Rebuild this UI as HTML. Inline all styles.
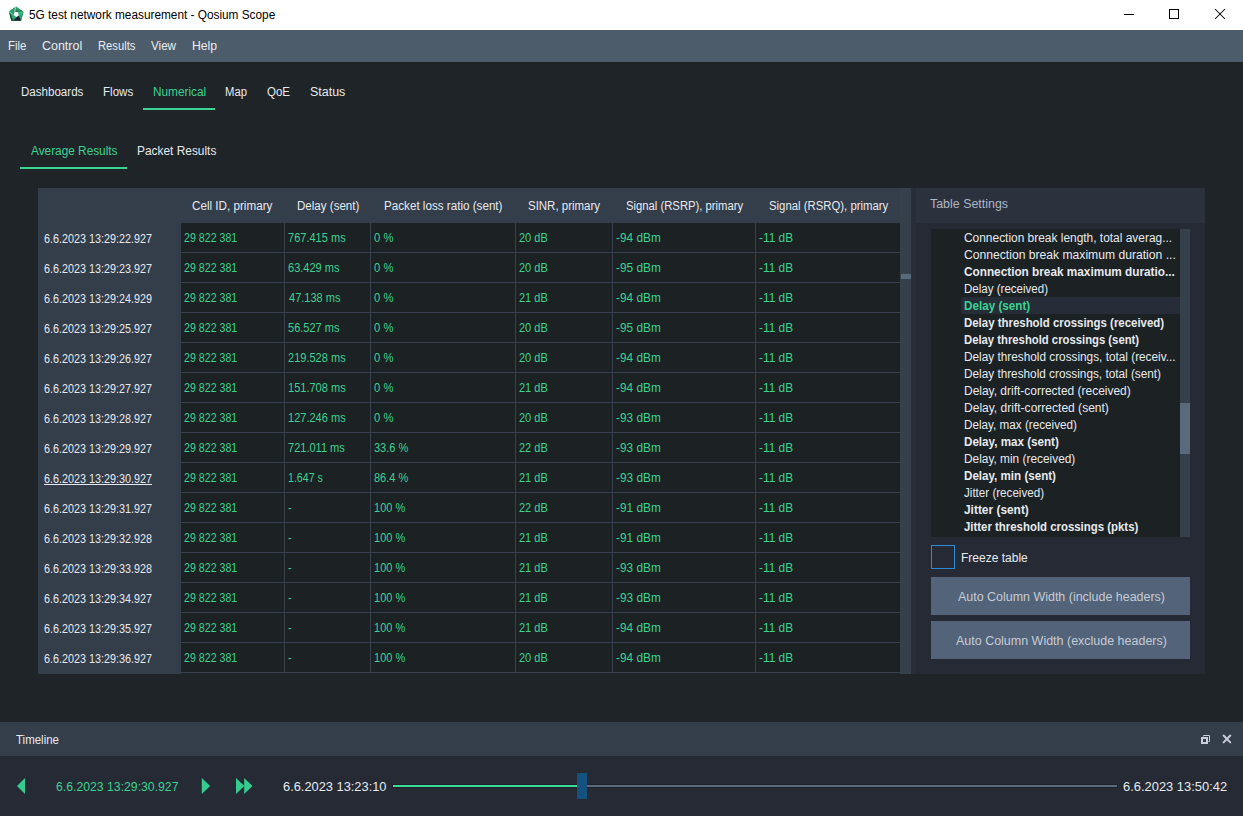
<!DOCTYPE html>
<html lang="en"><head><meta charset="utf-8"><title>5G test network measurement - Qosium Scope</title>
<style>
html,body{margin:0;padding:0;}
body{width:1243px;height:816px;overflow:hidden;background:#1f2428;position:relative;font-family:"Liberation Sans", sans-serif;}
.r{position:absolute;}
.t{position:absolute;white-space:pre;transform-origin:0 50%;line-height:20px;height:20px;}
</style></head><body>
<div class="r" style="left:0px;top:0px;width:1243px;height:30px;background:#ffffff;"></div>
<div class="r" style="left:0px;top:30px;width:1243px;height:32px;background:#4c5c6a;"></div>
<div class="r" style="left:143px;top:108px;width:72px;height:2px;background:#3bd391;"></div>
<div class="r" style="left:20px;top:167px;width:107px;height:2px;background:#3bd391;"></div>
<div class="r" style="left:38px;top:188px;width:873px;height:486px;background:#343d4a;"></div>
<div class="r" style="left:900px;top:188px;width:11px;height:486px;background:#36404a;"></div>
<div class="r" style="left:901px;top:274px;width:10px;height:5px;background:#596a7d;"></div>
<div class="r" style="left:181px;top:223px;width:719px;height:450px;background:#1c2124;"></div>
<div class="r" style="left:181px;top:673px;width:719px;height:1px;background:#1f2428;"></div>
<div class="r" style="left:181px;top:252px;width:719px;height:1px;background:#394151;"></div>
<div class="r" style="left:181px;top:282px;width:719px;height:1px;background:#394151;"></div>
<div class="r" style="left:181px;top:312px;width:719px;height:1px;background:#394151;"></div>
<div class="r" style="left:181px;top:342px;width:719px;height:1px;background:#394151;"></div>
<div class="r" style="left:181px;top:372px;width:719px;height:1px;background:#394151;"></div>
<div class="r" style="left:181px;top:402px;width:719px;height:1px;background:#394151;"></div>
<div class="r" style="left:181px;top:432px;width:719px;height:1px;background:#394151;"></div>
<div class="r" style="left:181px;top:462px;width:719px;height:1px;background:#394151;"></div>
<div class="r" style="left:181px;top:492px;width:719px;height:1px;background:#394151;"></div>
<div class="r" style="left:181px;top:522px;width:719px;height:1px;background:#394151;"></div>
<div class="r" style="left:181px;top:552px;width:719px;height:1px;background:#394151;"></div>
<div class="r" style="left:181px;top:582px;width:719px;height:1px;background:#394151;"></div>
<div class="r" style="left:181px;top:612px;width:719px;height:1px;background:#394151;"></div>
<div class="r" style="left:181px;top:642px;width:719px;height:1px;background:#394151;"></div>
<div class="r" style="left:181px;top:672px;width:719px;height:1px;background:#394151;"></div>
<div class="r" style="left:284px;top:223px;width:1px;height:450px;background:#394151;"></div>
<div class="r" style="left:370px;top:223px;width:1px;height:450px;background:#394151;"></div>
<div class="r" style="left:515px;top:223px;width:1px;height:450px;background:#394151;"></div>
<div class="r" style="left:612px;top:223px;width:1px;height:450px;background:#394151;"></div>
<div class="r" style="left:755px;top:223px;width:1px;height:450px;background:#394151;"></div>
<div class="r" style="left:911px;top:188px;width:294px;height:486px;background:#282e38;"></div>
<div class="r" style="left:916px;top:188px;width:289px;height:35px;background:#2b313d;"></div>
<div class="r" style="left:916px;top:223px;width:289px;height:451px;background:#262a35;"></div>
<div class="r" style="left:931px;top:229px;width:249px;height:308px;background:#1c2124;"></div>
<div class="r" style="left:1180px;top:229px;width:10px;height:308px;background:#36404a;"></div>
<div class="r" style="left:1180px;top:403px;width:10px;height:51px;background:#596a7d;"></div>
<div class="r" style="left:961px;top:297px;width:219px;height:17px;background:#272d38;"></div>
<div class="r" style="left:931px;top:545px;width:24px;height:24px;background:#252a35;box-sizing:border-box;border:1px solid #2d8ad6;"></div>
<div class="r" style="left:931px;top:577px;width:259px;height:38px;background:#536379;"></div>
<div class="r" style="left:931px;top:621px;width:259px;height:38px;background:#536379;"></div>
<div class="r" style="left:0px;top:722px;width:1243px;height:34px;background:#343d4a;"></div>
<div class="r" style="left:0px;top:756px;width:1243px;height:60px;background:#252a34;"></div>
<div class="r" style="left:392px;top:784px;width:185px;height:4px;background:#221f28;"></div>
<div class="r" style="left:587px;top:784px;width:531px;height:4px;background:#1e2229;"></div>
<div class="r" style="left:393px;top:785px;width:184px;height:2px;background:#37de99;"></div>
<div class="r" style="left:587px;top:785px;width:530px;height:2px;background:#5c6b7c;"></div>
<div class="r" style="left:577px;top:773px;width:10px;height:26px;background:#16527f;"></div>
<svg class="r" style="left:0;top:0" width="1243" height="816" viewBox="0 0 1243 816">
<g id="appicon">
<defs>
<linearGradient id="ga" x1="0" y1="0" x2="0" y2="1"><stop offset="0" stop-color="#3cc58c"/><stop offset="1" stop-color="#1b6a4a"/></linearGradient>
<linearGradient id="gb" x1="0" y1="0" x2="1" y2="1"><stop offset="0" stop-color="#3ac08a"/><stop offset="1" stop-color="#23885f"/></linearGradient>
<linearGradient id="gc" x1="1" y1="0" x2="0" y2="1"><stop offset="0" stop-color="#36bd86"/><stop offset="0.55" stop-color="#2aa673"/><stop offset="1" stop-color="#123e2e"/></linearGradient>
<linearGradient id="gd" x1="0" y1="0" x2="1" y2="0"><stop offset="0" stop-color="#2fae79"/><stop offset="1" stop-color="#258e64"/></linearGradient>
</defs>
<polygon points="16.1,6.6 23.5,12 21.1,20.8 11.4,20.8 8.9,11.6" fill="#2fa876"/>
<polygon points="15.4,7.1 16.1,6.6 23.5,12 17.9,12.3 14.9,12" fill="url(#ga)"/>
<polygon points="23.5,12 21.1,20.8 18.7,15.6 17.9,12.3" fill="url(#gb)"/>
<polygon points="21.1,20.8 12.6,20.8 18.7,15.6" fill="#1a222f"/>
<polygon points="12.6,20.8 11.4,20.8 8.9,11.6 13.7,14.9 16.3,17.1" fill="url(#gc)"/>
<polygon points="9.3,13.0 10.8,14.6 13.0,20.8 11.4,20.8" fill="#123a2b" opacity="0.85"/>
<polygon points="8.9,11.6 15.4,7.1 14.6,12 13.7,14.9" fill="url(#gd)"/>
<polygon points="14.6,12 17.9,12.3 18.7,15.6 16.3,17.1 13.7,14.9" fill="#ffffff"/>
<path d="M14.75 12 L15.4 7.2" stroke="#e8f5ee" stroke-width="0.7" fill="none"/>
<path d="M9.1 11.9 L13.7 14.9" stroke="#9fd9c0" stroke-width="0.6" fill="none"/>
<path d="M17.9 12.2 L23.4 12" stroke="#7fd4b0" stroke-width="0.5" fill="none"/>
</g>
<g stroke="#000" stroke-width="1" fill="none" shape-rendering="crispEdges">
<line x1="1124" y1="14.5" x2="1134" y2="14.5"/>
<rect x="1169.5" y="9.5" width="9" height="9"/>
</g>
<g stroke="#000" stroke-width="1.05" fill="none">
<line x1="1215" y1="9" x2="1225" y2="19"/><line x1="1225" y1="9" x2="1215" y2="19"/>
</g>
<g fill="#36cc8f">
<polygon points="17,786 25,778 25,794"/>
<polygon points="201.8,778 210.2,786 201.8,794"/>
<polygon points="236,778 244.3,786 236,794"/>
<polygon points="244.2,778 252.5,786 244.2,794"/>
</g>
<g fill="none" stroke="#c9d0db">
<path d="M1203.5 736.5 V735.5 H1209.5 V741.5 H1208.5" stroke-width="1"/>
<rect x="1202" y="738" width="5" height="5" stroke-width="2"/>
</g>
<g stroke="#c9cfda" stroke-width="1.9" stroke-linecap="round">
<line x1="1223.6" y1="735.5" x2="1230.3" y2="742.4"/><line x1="1230.3" y1="735.5" x2="1223.6" y2="742.4"/>
</g>
</svg>
<span class="t" id="t0" style="left:28.98px;top:5.09px;font-size:12px;color:#000000;transform:scaleX(0.9845);">5G test network measurement - Qosium Scope</span>
<span class="t" id="t1" style="left:7.70px;top:35.84px;font-size:12px;color:#e9edf1;transform:scaleX(0.9524);">File</span>
<span class="t" id="t2" style="left:42.35px;top:35.84px;font-size:12px;color:#e9edf1;transform:scaleX(1.0384);">Control</span>
<span class="t" id="t3" style="left:97.59px;top:35.84px;font-size:12px;color:#e9edf1;transform:scaleX(0.9338);">Results</span>
<span class="t" id="t4" style="left:151.24px;top:35.84px;font-size:12px;color:#e9edf1;transform:scaleX(0.9705);">View</span>
<span class="t" id="t5" style="left:191.77px;top:35.84px;font-size:12px;color:#e9edf1;transform:scaleX(1.0184);">Help</span>
<span class="t" id="t6" style="left:20.85px;top:81.84px;font-size:12px;color:#e6eaef;transform:scaleX(0.9640);">Dashboards</span>
<span class="t" id="t7" style="left:102.79px;top:81.84px;font-size:12px;color:#e6eaef;transform:scaleX(0.9637);">Flows</span>
<span class="t" id="t8" style="left:152.94px;top:81.84px;font-size:12px;color:#3bd391;transform:scaleX(0.9858);">Numerical</span>
<span class="t" id="t9" style="left:224.80px;top:81.84px;font-size:12px;color:#e6eaef;transform:scaleX(0.9396);">Map</span>
<span class="t" id="t10" style="left:267.33px;top:81.84px;font-size:12px;color:#e6eaef;transform:scaleX(0.9583);">QoE</span>
<span class="t" id="t11" style="left:309.72px;top:81.84px;font-size:12px;color:#e6eaef;transform:scaleX(1.0381);">Status</span>
<span class="t" id="t12" style="left:30.85px;top:140.84px;font-size:12px;color:#3bd391;transform:scaleX(0.9851);">Average Results</span>
<span class="t" id="t13" style="left:136.97px;top:140.84px;font-size:12px;color:#e6eaef;transform:scaleX(0.9915);">Packet Results</span>
<span class="t" id="t14" style="left:192.49px;top:195.84px;font-size:12px;color:#e6eaef;transform:scaleX(0.9721);">Cell ID, primary</span>
<span class="t" id="t15" style="left:296.71px;top:195.84px;font-size:12px;color:#e6eaef;transform:scaleX(0.9639);">Delay (sent)</span>
<span class="t" id="t16" style="left:383.54px;top:195.84px;font-size:12px;color:#e6eaef;transform:scaleX(0.9708);">Packet loss ratio (sent)</span>
<span class="t" id="t17" style="left:528.03px;top:195.84px;font-size:12px;color:#e6eaef;transform:scaleX(0.9556);">SINR, primary</span>
<span class="t" id="t18" style="left:626.27px;top:195.84px;font-size:12px;color:#e6eaef;transform:scaleX(0.9395);">Signal (RSRP), primary</span>
<span class="t" id="t19" style="left:768.85px;top:195.84px;font-size:12px;color:#e6eaef;transform:scaleX(0.9462);">Signal (RSRQ), primary</span>
<span class="t" id="t20" style="left:43.71px;top:228.63px;font-size:12.6px;color:#e6eaef;transform:scaleX(0.8570);">6.6.2023 13:29:22.927</span>
<span class="t" id="t21" style="left:183.58px;top:227.63px;font-size:12.6px;color:#3bd391;transform:scaleX(0.8452);">29 822 381</span>
<span class="t" id="t22" style="left:288.19px;top:227.63px;font-size:12.6px;color:#3bd391;transform:scaleX(0.8760);">767.415 ms</span>
<span class="t" id="t23" style="left:373.89px;top:227.63px;font-size:12.6px;color:#3bd391;transform:scaleX(0.8929);">0 %</span>
<span class="t" id="t24" style="left:519.29px;top:227.63px;font-size:12.6px;color:#3bd391;transform:scaleX(0.8732);">20 dB</span>
<span class="t" id="t25" style="left:616.47px;top:227.63px;font-size:12.6px;color:#3bd391;transform:scaleX(0.9408);">-94 dBm</span>
<span class="t" id="t26" style="left:758.98px;top:227.63px;font-size:12.6px;color:#3bd391;transform:scaleX(0.9411);">-11 dB</span>
<span class="t" id="t27" style="left:43.71px;top:258.63px;font-size:12.6px;color:#e6eaef;transform:scaleX(0.8570);">6.6.2023 13:29:23.927</span>
<span class="t" id="t28" style="left:183.58px;top:257.63px;font-size:12.6px;color:#3bd391;transform:scaleX(0.8452);">29 822 381</span>
<span class="t" id="t29" style="left:287.99px;top:257.63px;font-size:12.6px;color:#3bd391;transform:scaleX(0.8760);">63.429 ms</span>
<span class="t" id="t30" style="left:373.89px;top:257.63px;font-size:12.6px;color:#3bd391;transform:scaleX(0.8929);">0 %</span>
<span class="t" id="t31" style="left:518.92px;top:257.63px;font-size:12.6px;color:#3bd391;transform:scaleX(0.8732);">20 dB</span>
<span class="t" id="t32" style="left:616.06px;top:257.63px;font-size:12.6px;color:#3bd391;transform:scaleX(0.9408);">-95 dBm</span>
<span class="t" id="t33" style="left:758.98px;top:257.63px;font-size:12.6px;color:#3bd391;transform:scaleX(0.9411);">-11 dB</span>
<span class="t" id="t34" style="left:43.71px;top:288.63px;font-size:12.6px;color:#e6eaef;transform:scaleX(0.8570);">6.6.2023 13:29:24.929</span>
<span class="t" id="t35" style="left:183.58px;top:287.63px;font-size:12.6px;color:#3bd391;transform:scaleX(0.8452);">29 822 381</span>
<span class="t" id="t36" style="left:288.83px;top:287.63px;font-size:12.6px;color:#3bd391;transform:scaleX(0.8760);">47.138 ms</span>
<span class="t" id="t37" style="left:373.89px;top:287.63px;font-size:12.6px;color:#3bd391;transform:scaleX(0.8929);">0 %</span>
<span class="t" id="t38" style="left:518.92px;top:287.63px;font-size:12.6px;color:#3bd391;transform:scaleX(0.8732);">21 dB</span>
<span class="t" id="t39" style="left:616.06px;top:287.63px;font-size:12.6px;color:#3bd391;transform:scaleX(0.9408);">-94 dBm</span>
<span class="t" id="t40" style="left:758.98px;top:287.63px;font-size:12.6px;color:#3bd391;transform:scaleX(0.9411);">-11 dB</span>
<span class="t" id="t41" style="left:43.71px;top:318.63px;font-size:12.6px;color:#e6eaef;transform:scaleX(0.8570);">6.6.2023 13:29:25.927</span>
<span class="t" id="t42" style="left:183.58px;top:317.63px;font-size:12.6px;color:#3bd391;transform:scaleX(0.8452);">29 822 381</span>
<span class="t" id="t43" style="left:288.15px;top:317.63px;font-size:12.6px;color:#3bd391;transform:scaleX(0.8760);">56.527 ms</span>
<span class="t" id="t44" style="left:373.89px;top:317.63px;font-size:12.6px;color:#3bd391;transform:scaleX(0.8929);">0 %</span>
<span class="t" id="t45" style="left:518.92px;top:317.63px;font-size:12.6px;color:#3bd391;transform:scaleX(0.8732);">20 dB</span>
<span class="t" id="t46" style="left:616.06px;top:317.63px;font-size:12.6px;color:#3bd391;transform:scaleX(0.9408);">-95 dBm</span>
<span class="t" id="t47" style="left:758.98px;top:317.63px;font-size:12.6px;color:#3bd391;transform:scaleX(0.9411);">-11 dB</span>
<span class="t" id="t48" style="left:43.71px;top:348.63px;font-size:12.6px;color:#e6eaef;transform:scaleX(0.8570);">6.6.2023 13:29:26.927</span>
<span class="t" id="t49" style="left:183.58px;top:347.63px;font-size:12.6px;color:#3bd391;transform:scaleX(0.8452);">29 822 381</span>
<span class="t" id="t50" style="left:288.07px;top:347.63px;font-size:12.6px;color:#3bd391;transform:scaleX(0.8760);">219.528 ms</span>
<span class="t" id="t51" style="left:373.89px;top:347.63px;font-size:12.6px;color:#3bd391;transform:scaleX(0.8929);">0 %</span>
<span class="t" id="t52" style="left:518.92px;top:347.63px;font-size:12.6px;color:#3bd391;transform:scaleX(0.8732);">20 dB</span>
<span class="t" id="t53" style="left:616.06px;top:347.63px;font-size:12.6px;color:#3bd391;transform:scaleX(0.9408);">-94 dBm</span>
<span class="t" id="t54" style="left:758.98px;top:347.63px;font-size:12.6px;color:#3bd391;transform:scaleX(0.9411);">-11 dB</span>
<span class="t" id="t55" style="left:43.71px;top:378.63px;font-size:12.6px;color:#e6eaef;transform:scaleX(0.8570);">6.6.2023 13:29:27.927</span>
<span class="t" id="t56" style="left:183.58px;top:377.63px;font-size:12.6px;color:#3bd391;transform:scaleX(0.8452);">29 822 381</span>
<span class="t" id="t57" style="left:287.59px;top:377.63px;font-size:12.6px;color:#3bd391;transform:scaleX(0.8760);">151.708 ms</span>
<span class="t" id="t58" style="left:373.89px;top:377.63px;font-size:12.6px;color:#3bd391;transform:scaleX(0.8929);">0 %</span>
<span class="t" id="t59" style="left:518.92px;top:377.63px;font-size:12.6px;color:#3bd391;transform:scaleX(0.8732);">21 dB</span>
<span class="t" id="t60" style="left:616.06px;top:377.63px;font-size:12.6px;color:#3bd391;transform:scaleX(0.9408);">-94 dBm</span>
<span class="t" id="t61" style="left:758.98px;top:377.63px;font-size:12.6px;color:#3bd391;transform:scaleX(0.9411);">-11 dB</span>
<span class="t" id="t62" style="left:43.71px;top:408.63px;font-size:12.6px;color:#e6eaef;transform:scaleX(0.8570);">6.6.2023 13:29:28.927</span>
<span class="t" id="t63" style="left:183.58px;top:407.63px;font-size:12.6px;color:#3bd391;transform:scaleX(0.8452);">29 822 381</span>
<span class="t" id="t64" style="left:287.59px;top:407.63px;font-size:12.6px;color:#3bd391;transform:scaleX(0.8760);">127.246 ms</span>
<span class="t" id="t65" style="left:373.89px;top:407.63px;font-size:12.6px;color:#3bd391;transform:scaleX(0.8929);">0 %</span>
<span class="t" id="t66" style="left:518.92px;top:407.63px;font-size:12.6px;color:#3bd391;transform:scaleX(0.8732);">20 dB</span>
<span class="t" id="t67" style="left:616.06px;top:407.63px;font-size:12.6px;color:#3bd391;transform:scaleX(0.9408);">-93 dBm</span>
<span class="t" id="t68" style="left:758.98px;top:407.63px;font-size:12.6px;color:#3bd391;transform:scaleX(0.9411);">-11 dB</span>
<span class="t" id="t69" style="left:43.71px;top:438.63px;font-size:12.6px;color:#e6eaef;transform:scaleX(0.8570);">6.6.2023 13:29:29.927</span>
<span class="t" id="t70" style="left:183.58px;top:437.63px;font-size:12.6px;color:#3bd391;transform:scaleX(0.8452);">29 822 381</span>
<span class="t" id="t71" style="left:288.41px;top:437.63px;font-size:12.6px;color:#3bd391;transform:scaleX(0.8760);">721.011 ms</span>
<span class="t" id="t72" style="left:373.70px;top:437.63px;font-size:12.6px;color:#3bd391;transform:scaleX(0.8736);">33.6 %</span>
<span class="t" id="t73" style="left:518.92px;top:437.63px;font-size:12.6px;color:#3bd391;transform:scaleX(0.8732);">22 dB</span>
<span class="t" id="t74" style="left:616.06px;top:437.63px;font-size:12.6px;color:#3bd391;transform:scaleX(0.9408);">-93 dBm</span>
<span class="t" id="t75" style="left:758.98px;top:437.63px;font-size:12.6px;color:#3bd391;transform:scaleX(0.9411);">-11 dB</span>
<span class="t" id="t76" style="left:43.71px;top:468.63px;font-size:12.6px;color:#e6eaef;transform:scaleX(0.8570);text-decoration:underline;text-underline-offset:1px;">6.6.2023 13:29:30.927</span>
<span class="t" id="t77" style="left:183.58px;top:467.63px;font-size:12.6px;color:#3bd391;transform:scaleX(0.8452);">29 822 381</span>
<span class="t" id="t78" style="left:288.41px;top:467.63px;font-size:12.6px;color:#3bd391;transform:scaleX(0.8423);">1.647 s</span>
<span class="t" id="t79" style="left:374.02px;top:467.63px;font-size:12.6px;color:#3bd391;transform:scaleX(0.8741);">86.4 %</span>
<span class="t" id="t80" style="left:518.92px;top:467.63px;font-size:12.6px;color:#3bd391;transform:scaleX(0.8732);">21 dB</span>
<span class="t" id="t81" style="left:616.06px;top:467.63px;font-size:12.6px;color:#3bd391;transform:scaleX(0.9408);">-93 dBm</span>
<span class="t" id="t82" style="left:758.98px;top:467.63px;font-size:12.6px;color:#3bd391;transform:scaleX(0.9411);">-11 dB</span>
<span class="t" id="t83" style="left:43.71px;top:498.63px;font-size:12.6px;color:#e6eaef;transform:scaleX(0.8570);">6.6.2023 13:29:31.927</span>
<span class="t" id="t84" style="left:183.58px;top:497.63px;font-size:12.6px;color:#3bd391;transform:scaleX(0.8452);">29 822 381</span>
<span class="t" id="t85" style="left:288.08px;top:497.63px;font-size:12.6px;color:#3bd391;transform:scaleX(0.8760);">-</span>
<span class="t" id="t86" style="left:373.50px;top:497.63px;font-size:12.6px;color:#3bd391;transform:scaleX(0.8745);">100 %</span>
<span class="t" id="t87" style="left:518.92px;top:497.63px;font-size:12.6px;color:#3bd391;transform:scaleX(0.8732);">22 dB</span>
<span class="t" id="t88" style="left:616.06px;top:497.63px;font-size:12.6px;color:#3bd391;transform:scaleX(0.9408);">-91 dBm</span>
<span class="t" id="t89" style="left:758.98px;top:497.63px;font-size:12.6px;color:#3bd391;transform:scaleX(0.9411);">-11 dB</span>
<span class="t" id="t90" style="left:43.71px;top:528.63px;font-size:12.6px;color:#e6eaef;transform:scaleX(0.8570);">6.6.2023 13:29:32.928</span>
<span class="t" id="t91" style="left:183.58px;top:527.63px;font-size:12.6px;color:#3bd391;transform:scaleX(0.8452);">29 822 381</span>
<span class="t" id="t92" style="left:288.08px;top:527.63px;font-size:12.6px;color:#3bd391;transform:scaleX(0.8760);">-</span>
<span class="t" id="t93" style="left:373.50px;top:527.63px;font-size:12.6px;color:#3bd391;transform:scaleX(0.8745);">100 %</span>
<span class="t" id="t94" style="left:518.92px;top:527.63px;font-size:12.6px;color:#3bd391;transform:scaleX(0.8732);">21 dB</span>
<span class="t" id="t95" style="left:616.06px;top:527.63px;font-size:12.6px;color:#3bd391;transform:scaleX(0.9408);">-91 dBm</span>
<span class="t" id="t96" style="left:758.98px;top:527.63px;font-size:12.6px;color:#3bd391;transform:scaleX(0.9411);">-11 dB</span>
<span class="t" id="t97" style="left:43.71px;top:558.63px;font-size:12.6px;color:#e6eaef;transform:scaleX(0.8570);">6.6.2023 13:29:33.928</span>
<span class="t" id="t98" style="left:183.58px;top:557.63px;font-size:12.6px;color:#3bd391;transform:scaleX(0.8452);">29 822 381</span>
<span class="t" id="t99" style="left:288.08px;top:557.63px;font-size:12.6px;color:#3bd391;transform:scaleX(0.8760);">-</span>
<span class="t" id="t100" style="left:373.50px;top:557.63px;font-size:12.6px;color:#3bd391;transform:scaleX(0.8745);">100 %</span>
<span class="t" id="t101" style="left:518.92px;top:557.63px;font-size:12.6px;color:#3bd391;transform:scaleX(0.8732);">21 dB</span>
<span class="t" id="t102" style="left:616.06px;top:557.63px;font-size:12.6px;color:#3bd391;transform:scaleX(0.9408);">-93 dBm</span>
<span class="t" id="t103" style="left:758.98px;top:557.63px;font-size:12.6px;color:#3bd391;transform:scaleX(0.9411);">-11 dB</span>
<span class="t" id="t104" style="left:43.71px;top:588.63px;font-size:12.6px;color:#e6eaef;transform:scaleX(0.8570);">6.6.2023 13:29:34.927</span>
<span class="t" id="t105" style="left:183.58px;top:587.63px;font-size:12.6px;color:#3bd391;transform:scaleX(0.8452);">29 822 381</span>
<span class="t" id="t106" style="left:288.08px;top:587.63px;font-size:12.6px;color:#3bd391;transform:scaleX(0.8760);">-</span>
<span class="t" id="t107" style="left:373.50px;top:587.63px;font-size:12.6px;color:#3bd391;transform:scaleX(0.8745);">100 %</span>
<span class="t" id="t108" style="left:518.92px;top:587.63px;font-size:12.6px;color:#3bd391;transform:scaleX(0.8732);">21 dB</span>
<span class="t" id="t109" style="left:616.06px;top:587.63px;font-size:12.6px;color:#3bd391;transform:scaleX(0.9408);">-93 dBm</span>
<span class="t" id="t110" style="left:758.98px;top:587.63px;font-size:12.6px;color:#3bd391;transform:scaleX(0.9411);">-11 dB</span>
<span class="t" id="t111" style="left:43.71px;top:618.63px;font-size:12.6px;color:#e6eaef;transform:scaleX(0.8570);">6.6.2023 13:29:35.927</span>
<span class="t" id="t112" style="left:183.58px;top:617.63px;font-size:12.6px;color:#3bd391;transform:scaleX(0.8452);">29 822 381</span>
<span class="t" id="t113" style="left:288.08px;top:617.63px;font-size:12.6px;color:#3bd391;transform:scaleX(0.8760);">-</span>
<span class="t" id="t114" style="left:373.50px;top:617.63px;font-size:12.6px;color:#3bd391;transform:scaleX(0.8745);">100 %</span>
<span class="t" id="t115" style="left:518.92px;top:617.63px;font-size:12.6px;color:#3bd391;transform:scaleX(0.8732);">21 dB</span>
<span class="t" id="t116" style="left:616.06px;top:617.63px;font-size:12.6px;color:#3bd391;transform:scaleX(0.9408);">-94 dBm</span>
<span class="t" id="t117" style="left:758.98px;top:617.63px;font-size:12.6px;color:#3bd391;transform:scaleX(0.9411);">-11 dB</span>
<span class="t" id="t118" style="left:43.71px;top:648.63px;font-size:12.6px;color:#e6eaef;transform:scaleX(0.8570);">6.6.2023 13:29:36.927</span>
<span class="t" id="t119" style="left:183.58px;top:647.63px;font-size:12.6px;color:#3bd391;transform:scaleX(0.8452);">29 822 381</span>
<span class="t" id="t120" style="left:288.08px;top:647.63px;font-size:12.6px;color:#3bd391;transform:scaleX(0.8760);">-</span>
<span class="t" id="t121" style="left:373.50px;top:647.63px;font-size:12.6px;color:#3bd391;transform:scaleX(0.8745);">100 %</span>
<span class="t" id="t122" style="left:518.92px;top:647.63px;font-size:12.6px;color:#3bd391;transform:scaleX(0.8732);">20 dB</span>
<span class="t" id="t123" style="left:616.06px;top:647.63px;font-size:12.6px;color:#3bd391;transform:scaleX(0.9408);">-94 dBm</span>
<span class="t" id="t124" style="left:758.98px;top:647.63px;font-size:12.6px;color:#3bd391;transform:scaleX(0.9411);">-11 dB</span>
<span class="t" id="t125" style="left:929.67px;top:193.94px;font-size:12px;color:#aeb6c3;transform:scaleX(1.0347);">Table Settings</span>
<span class="t" id="t126" style="left:964.34px;top:227.84px;font-size:12px;color:#e6eaef;transform:scaleX(0.9934);">Connection break length, total averag...</span>
<span class="t" id="t127" style="left:964.31px;top:244.84px;font-size:12px;color:#e6eaef;transform:scaleX(1.0112);">Connection break maximum duration ...</span>
<span class="t" id="t128" style="left:964.24px;top:261.84px;font-size:12px;color:#e6eaef;transform:scaleX(0.9820);font-weight:bold;">Connection break maximum duratio...</span>
<span class="t" id="t129" style="left:963.91px;top:278.84px;font-size:12px;color:#e6eaef;transform:scaleX(0.9621);">Delay (received)</span>
<span class="t" id="t130" style="left:963.97px;top:295.84px;font-size:12px;color:#3bd391;transform:scaleX(0.9728);font-weight:bold;">Delay (sent)</span>
<span class="t" id="t131" style="left:963.85px;top:312.84px;font-size:12px;color:#e6eaef;transform:scaleX(0.9526);font-weight:bold;">Delay threshold crossings (received)</span>
<span class="t" id="t132" style="left:964.07px;top:329.84px;font-size:12px;color:#e6eaef;transform:scaleX(0.9411);font-weight:bold;">Delay threshold crossings (sent)</span>
<span class="t" id="t133" style="left:964.05px;top:346.84px;font-size:12px;color:#e6eaef;transform:scaleX(0.9831);">Delay threshold crossings, total (receiv...</span>
<span class="t" id="t134" style="left:964.01px;top:363.84px;font-size:12px;color:#e6eaef;transform:scaleX(0.9814);">Delay threshold crossings, total (sent)</span>
<span class="t" id="t135" style="left:963.71px;top:380.84px;font-size:12px;color:#e6eaef;transform:scaleX(0.9975);">Delay, drift-corrected (received)</span>
<span class="t" id="t136" style="left:964.04px;top:397.84px;font-size:12px;color:#e6eaef;transform:scaleX(1.0027);">Delay, drift-corrected (sent)</span>
<span class="t" id="t137" style="left:963.81px;top:414.84px;font-size:12px;color:#e6eaef;transform:scaleX(0.9749);">Delay, max (received)</span>
<span class="t" id="t138" style="left:963.97px;top:431.84px;font-size:12px;color:#e6eaef;transform:scaleX(0.9696);font-weight:bold;">Delay, max (sent)</span>
<span class="t" id="t139" style="left:963.73px;top:448.84px;font-size:12px;color:#e6eaef;transform:scaleX(0.9896);">Delay, min (received)</span>
<span class="t" id="t140" style="left:963.98px;top:465.84px;font-size:12px;color:#e6eaef;transform:scaleX(0.9668);font-weight:bold;">Delay, min (sent)</span>
<span class="t" id="t141" style="left:964.25px;top:482.84px;font-size:12px;color:#e6eaef;transform:scaleX(0.9676);">Jitter (received)</span>
<span class="t" id="t142" style="left:964.12px;top:499.84px;font-size:12px;color:#e6eaef;transform:scaleX(0.9920);font-weight:bold;">Jitter (sent)</span>
<span class="t" id="t143" style="left:964.05px;top:516.84px;font-size:12px;color:#e6eaef;transform:scaleX(0.9504);font-weight:bold;">Jitter threshold crossings (pkts)</span>
<span class="t" id="t144" style="left:960.68px;top:547.74px;font-size:12px;color:#e6eaef;transform:scaleX(1.0011);">Freeze table</span>
<span class="t" id="t145" style="left:957.82px;top:586.84px;font-size:12px;color:#c5ccd6;transform:scaleX(1.0378);">Auto Column Width (include headers)</span>
<span class="t" id="t146" style="left:955.66px;top:630.64px;font-size:12px;color:#c5ccd6;transform:scaleX(1.0400);">Auto Column Width (exclude headers)</span>
<span class="t" id="t147" style="left:15.53px;top:729.94px;font-size:12px;color:#e6eaef;transform:scaleX(0.9570);">Timeline</span>
<span class="t" id="t148" style="left:56.34px;top:776.78px;font-size:13.33px;color:#3bd391;transform:scaleX(0.9181);">6.6.2023 13:29:30.927</span>
<span class="t" id="t149" style="left:282.86px;top:776.78px;font-size:13.33px;color:#e6eaef;transform:scaleX(0.9630);">6.6.2023 13:23:10</span>
<span class="t" id="t150" style="left:1122.70px;top:776.78px;font-size:13.33px;color:#e6eaef;transform:scaleX(0.9690);">6.6.2023 13:50:42</span>
</body></html>
